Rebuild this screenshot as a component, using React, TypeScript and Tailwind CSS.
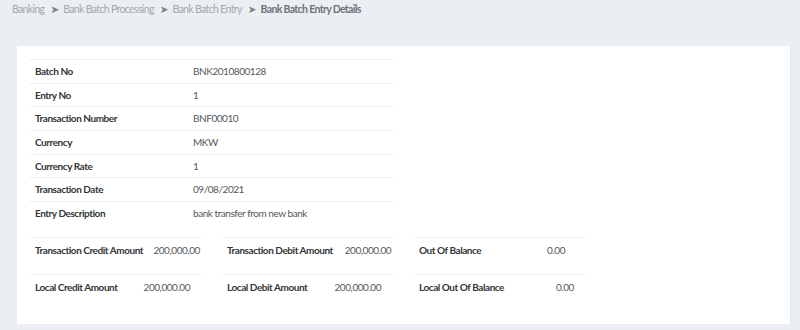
import React from "react";

const rows: [string, string][] = [
  ["Batch No", "BNK2010800128"],
  ["Entry No", "1"],
  ["Transaction Number", "BNF00010"],
  ["Currency", "MKW"],
  ["Currency Rate", "1"],
  ["Transaction Date", "09/08/2021"],
  ["Entry Description", "bank transfer from new bank"],
];

const amounts: [string, string][][] = [
  [
    ["Transaction Credit Amount", "200,000.00"],
    ["Local Credit Amount", "200,000.00"],
  ],
  [
    ["Transaction Debit Amount", "200,000.00"],
    ["Local Debit Amount", "200,000.00"],
  ],
  [
    ["Out Of Balance", "0.00"],
    ["Local Out Of Balance", "0.00"],
  ],
];

function Arrow() {
  return (
    <span className="ml-[6px] mr-[4px] text-[#7d8086] text-[10.5px] font-['DejaVu_Sans',sans-serif] tracking-normal">
      ➤
    </span>
  );
}

export default function App() {
  return (
    <div className="min-h-[330px] bg-[#ebeef3] font-['Lato',sans-serif] text-[10px]">
      <nav className="flex items-center h-[46px] pb-[26px] pl-[12px] text-[10.5px] tracking-[-0.65px] text-[#a3a7ad]">
        <span>Banking</span>
        <Arrow />
        <span>Bank Batch Processing</span>
        <Arrow />
        <span>Bank Batch Entry</span>
        <Arrow />
        <span className="font-bold text-[#6f7378]">Bank Batch Entry Details</span>
      </nav>
      <div className="ml-[17px] mr-[10px] bg-white pt-[13px] pb-[14px] pl-[12px] tracking-[-0.45px] shadow-[1px_0_1px_rgba(0,0,0,0.04)]">
        <table className="w-[365px] border-collapse">
          <tbody>
            {rows.map(([k, v]) => (
              <tr key={k} className="h-[23.7px]">
                <td className="w-[158px] border-t border-[#eef0f3] pl-[6px] font-bold text-[#333639]">{k}</td>
                <td className="border-t border-[#eef0f3] pl-[6px] text-[#55595e]">{v}</td>
              </tr>
            ))}
          </tbody>
        </table>
        <div className="mt-[12px] flex gap-[19px]">
          {amounts.map((col, ci) => (
            <div key={ci} className="w-[173px]">
              {col.map(([k, v]) => (
                <table key={k} className="w-full border-collapse">
                  <tbody>
                    <tr className="h-[36px]">
                      <td className="border-t border-[#eef0f3] pl-[6px] pt-[1px] align-top leading-[22px] font-bold text-[#333639] whitespace-nowrap">{k}</td>
                      <td className="border-t border-[#eef0f3] pl-[6px] pt-[1px] align-top leading-[22px] text-[#55595e] whitespace-nowrap">{v}</td>
                    </tr>
                  </tbody>
                </table>
              ))}
            </div>
          ))}
        </div>
      </div>
    </div>
  );
}
